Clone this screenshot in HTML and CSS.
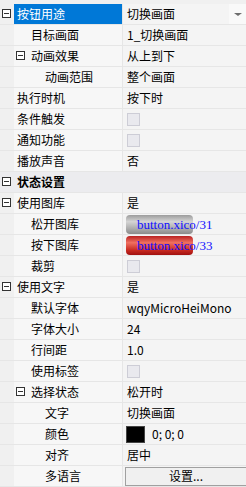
FILE: index.html
```html
<!DOCTYPE html>
<html lang="zh">
<head>
    <meta charset="UTF-8">
    <title>属性</title>
    <link rel="stylesheet" href="styles.css">
</head>
<body>
<div class="grid">
    <div class="row">
        <span class="gut"><i class="tog"></i></span>
        <span class="name sel">按钮用途</span>
        <span class="val combo">切换画面<b class="drop"><i class="arrow"></i></b></span>
    </div>
    <div class="row">
        <span class="gut"></span>
        <span class="name lv2">目标画面</span>
        <span class="val">1_切换画面</span>
    </div>
    <div class="row">
        <span class="gut"></span>
        <span class="name lv2"><i class="tog sub"></i>动画效果</span>
        <span class="val">从上到下</span>
    </div>
    <div class="row">
        <span class="gut"></span>
        <span class="name lv3">动画范围</span>
        <span class="val">整个画面</span>
    </div>
    <div class="row">
        <span class="gut"></span>
        <span class="name">执行时机</span>
        <span class="val">按下时</span>
    </div>
    <div class="row">
        <span class="gut"></span>
        <span class="name">条件触发</span>
        <span class="val"><i class="chk"></i></span>
    </div>
    <div class="row">
        <span class="gut"></span>
        <span class="name">通知功能</span>
        <span class="val"><i class="chk"></i></span>
    </div>
    <div class="row">
        <span class="gut"></span>
        <span class="name">播放声音</span>
        <span class="val">否</span>
    </div>
    <div class="row cat">
        <span class="gut"><i class="tog"></i></span>
        <span class="name">状态设置</span>
    </div>
    <div class="row">
        <span class="gut"><i class="tog"></i></span>
        <span class="name">使用图库</span>
        <span class="val">是</span>
    </div>
    <div class="row">
        <span class="gut"></span>
        <span class="name lv2">松开图库</span>
        <span class="val"><span class="pic gray">button.xico/31</span></span>
    </div>
    <div class="row">
        <span class="gut"></span>
        <span class="name lv2">按下图库</span>
        <span class="val"><span class="pic red">button.xico/33</span></span>
    </div>
    <div class="row">
        <span class="gut"></span>
        <span class="name lv2">裁剪</span>
        <span class="val"><i class="chk"></i></span>
    </div>
    <div class="row">
        <span class="gut"><i class="tog"></i></span>
        <span class="name">使用文字</span>
        <span class="val">是</span>
    </div>
    <div class="row">
        <span class="gut"></span>
        <span class="name lv2">默认字体</span>
        <span class="val">wqyMicroHeiMono</span>
    </div>
    <div class="row">
        <span class="gut"></span>
        <span class="name lv2">字体大小</span>
        <span class="val">24</span>
    </div>
    <div class="row">
        <span class="gut"></span>
        <span class="name lv2">行间距</span>
        <span class="val">1.0</span>
    </div>
    <div class="row">
        <span class="gut"></span>
        <span class="name lv2">使用标签</span>
        <span class="val"><i class="chk"></i></span>
    </div>
    <div class="row">
        <span class="gut"></span>
        <span class="name lv2"><i class="tog sub"></i>选择状态</span>
        <span class="val">松开时</span>
    </div>
    <div class="row">
        <span class="gut"></span>
        <span class="name lv3">文字</span>
        <span class="val">切换画面</span>
    </div>
    <div class="row">
        <span class="gut"></span>
        <span class="name lv3">颜色</span>
        <span class="val"><i class="swatch"></i>0; 0; 0</span>
    </div>
    <div class="row">
        <span class="gut"></span>
        <span class="name lv3">对齐</span>
        <span class="val">居中</span>
    </div>
    <div class="row">
        <span class="gut"></span>
        <span class="name lv3">多语言</span>
        <span class="val"><button type="button" class="btn">设置...</button></span>
    </div>
</div>
</body>
</html>
```

FILE: styles.css
```css
body {
    margin: 0;
    background-color: #f0f0f0;
    font-family: 'Noto Sans CJK SC', 'Noto Sans', sans-serif;
    font-size: 12px;
    color: #000;
}

div.grid {
    padding-top: 4px;
    width: 246px;
    overflow: hidden;
}

div.grid div.row {
    display: flex;
    height: 20px;
    border-bottom: 1px solid #e6e6e6;
    line-height: 20px;
    white-space: nowrap;
}

div.grid div.row span.gut {
    position: relative;
    width: 14px;
    flex: none;
    background-color: #f0f0f0;
}

div.grid div.row span.name {
    position: relative;
    width: 105px;
    flex: none;
    padding-left: 3px;
    background-color: #f7f7f7;
    border-right: 1px solid #e6e6e6;
}

div.grid div.row span.name.lv2 {
    width: 91px;
    padding-left: 17px;
}

div.grid div.row span.name.lv3 {
    width: 77px;
    padding-left: 31px;
}

div.grid div.row span.name.sel {
    background-color: #0078d7;
    color: white;
}

div.grid div.row span.val {
    position: relative;
    flex: 1;
    display: flex;
    align-items: center;
    padding-left: 4px;
    background-color: #f4f4f4;
}

div.grid div.row.cat {
    background-color: #ececef;
    font-weight: bold;
}

div.grid div.row.cat span.gut,
div.grid div.row.cat span.name {
    background-color: #ececef;
    border-right: none;
}

/* 펼침 버튼 */
i.tog {
    position: absolute;
    left: 2px;
    top: 5px;
    width: 7px;
    height: 7px;
    border: 1px solid #333;
    background-color: #fff;
}

i.tog::after {
    content: "";
    position: absolute;
    left: 1px;
    top: 3px;
    width: 5px;
    height: 1px;
    background-color: #333;
}

i.tog.sub {
    left: 2px;
}

span.combo b.drop {
    position: absolute;
    right: 0;
    top: 0;
    width: 17px;
    height: 20px;
    background-color: #f9f9f9;
}

span.combo b.drop i.arrow {
    position: absolute;
    left: 5px;
    top: 9px;
    border-left: 4px solid transparent;
    border-right: 4px solid transparent;
    border-top: 3px solid #6d6d6d;
}

i.chk {
    display: block;
    width: 11px;
    height: 11px;
    border: 1px solid #cdcdd6;
    background-color: #e9e9ee;
}

span.pic {
    display: block;
    width: 67px;
    height: 19px;
    margin-left: -1px;
    border-radius: 4px;
    font-family: 'Liberation Serif', serif;
    font-size: 13px;
    line-height: 19px;
    color: #1010ff;
    padding-left: 11px;
    box-sizing: border-box;
    overflow: visible;
}

span.pic.gray {
    background: linear-gradient(#9c9c9c, #d4d4d4 35%, #a8a8a8 75%, #8a8a8a);
}

span.pic.red {
    background: linear-gradient(#b82020, #f07060 35%, #c82a20 75%, #a01010);
}

i.swatch {
    display: block;
    width: 17px;
    height: 15px;
    border: 1px solid #444;
    background-color: #000;
    margin-right: 7px;
    margin-left: -1px;
}

button.btn {
    width: 122px;
    height: 19px;
    margin-left: -2px;
    padding: 0;
    border: 1px solid #a0a0a0;
    background-color: #f0f0f0;
    font-family: 'Noto Sans CJK SC', sans-serif;
    font-size: 12px;
    line-height: 16px;
    color: #000;
}
```
